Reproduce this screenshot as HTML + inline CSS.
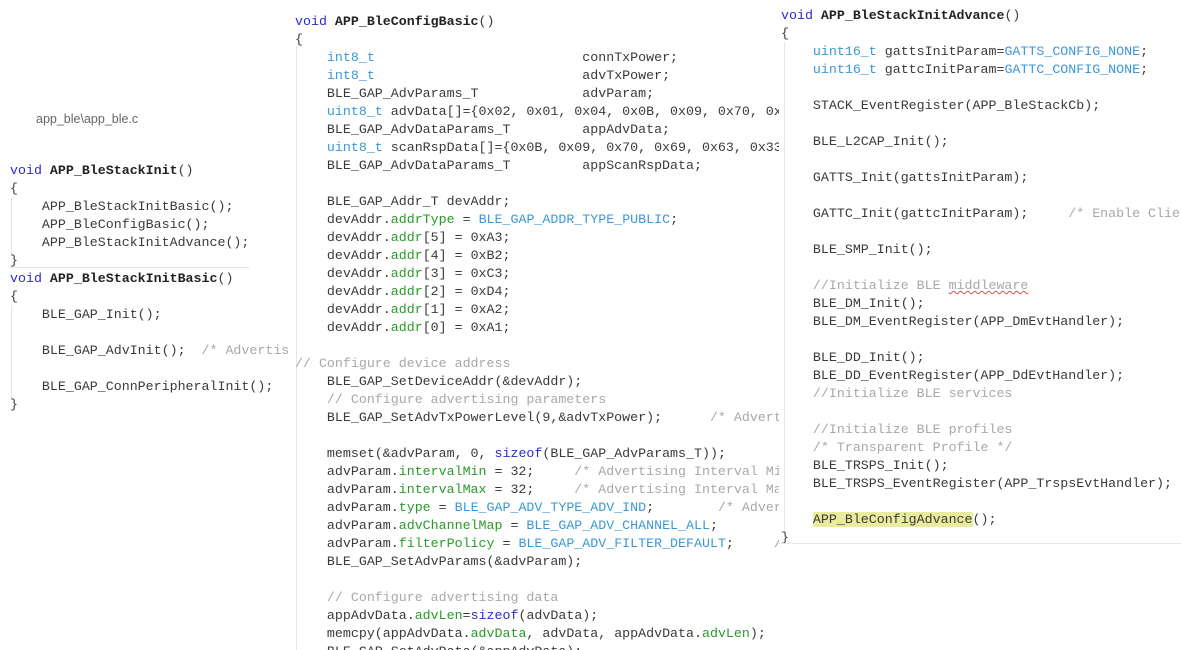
<!DOCTYPE html>
<html><head><meta charset="utf-8"><style>
html,body{margin:0;padding:0;background:#fff;width:1181px;height:650px;overflow:hidden;position:relative}
pre{margin:0;font-family:"Liberation Mono",monospace;font-size:13.3px;line-height:18px;color:#3a3a3a;position:absolute;white-space:pre}
.p{position:absolute;overflow:hidden;background:#fff}
.k{color:#2a2ad0}.b{font-weight:bold;color:#222}.t{color:#3a98d8}.m{color:#2a9a2a}.c{color:#a8a8a8}
.g{position:absolute;width:1px;background:#e6e6e6}
.h{background:#e8ec9c}
.sq{text-decoration:underline wavy #e05050;text-decoration-thickness:1px}
</style></head><body>
<div class="p" style="left:0;top:0;width:292px;height:650px">
<div style="position:absolute;left:36px;top:112px;font-family:'Liberation Sans',sans-serif;font-size:12.5px;color:#666">app_ble\app_ble.c</div>
<div class="g" style="left:11px;top:197px;height:58px"></div>
<div class="g" style="left:11px;top:305px;height:94px"></div>
<div style="position:absolute;left:10px;top:267px;width:240px;height:1px;background:#e4e4e4"></div>
<pre style="left:10px;top:162px"><span class="k">void</span> <span class="b">APP_BleStackInit</span>()
{
    APP_BleStackInitBasic();
    APP_BleConfigBasic();
    APP_BleStackInitAdvance();
}
<span class="k">void</span> <span class="b">APP_BleStackInitBasic</span>()
{
    BLE_GAP_Init();

    BLE_GAP_AdvInit();  <span class="c">/* Advertis</span>

    BLE_GAP_ConnPeripheralInit();
}</pre>
</div>
<div class="p" style="left:292px;top:0;width:488px;height:650px">
<div class="g" style="left:4px;top:46px;height:604px"></div>
<pre style="left:3px;top:13px"><span class="k">void</span> <span class="b">APP_BleConfigBasic</span>()
{
    <span class="t">int8_t</span>                          connTxPower;
    <span class="t">int8_t</span>                          advTxPower;
    BLE_GAP_AdvParams_T             advParam;
    <span class="t">uint8_t</span> advData[]={0x02, 0x01, 0x04, 0x0B, 0x09, 0x70, 0x
    BLE_GAP_AdvDataParams_T         appAdvData;
    <span class="t">uint8_t</span> scanRspData[]={0x0B, 0x09, 0x70, 0x69, 0x63, 0x33
    BLE_GAP_AdvDataParams_T         appScanRspData;

    BLE_GAP_Addr_T devAddr;
    devAddr.<span class="m">addrType</span> = <span class="t">BLE_GAP_ADDR_TYPE_PUBLIC</span>;
    devAddr.<span class="m">addr</span>[5] = 0xA3;
    devAddr.<span class="m">addr</span>[4] = 0xB2;
    devAddr.<span class="m">addr</span>[3] = 0xC3;
    devAddr.<span class="m">addr</span>[2] = 0xD4;
    devAddr.<span class="m">addr</span>[1] = 0xA2;
    devAddr.<span class="m">addr</span>[0] = 0xA1;

<span class="c">// Configure device address</span>
    BLE_GAP_SetDeviceAddr(&amp;devAddr);
    <span class="c">// Configure advertising parameters</span>
    BLE_GAP_SetAdvTxPowerLevel(9,&amp;advTxPower);      <span class="c">/* Advert</span>

    memset(&amp;advParam, 0, <span class="k">sizeof</span>(BLE_GAP_AdvParams_T));
    advParam.<span class="m">intervalMin</span> = 32;     <span class="c">/* Advertising Interval Mi</span>
    advParam.<span class="m">intervalMax</span> = 32;     <span class="c">/* Advertising Interval Ma</span>
    advParam.<span class="m">type</span> = <span class="t">BLE_GAP_ADV_TYPE_ADV_IND</span>;        <span class="c">/* Adver</span>
    advParam.<span class="m">advChannelMap</span> = <span class="t">BLE_GAP_ADV_CHANNEL_ALL</span>;
    advParam.<span class="m">filterPolicy</span> = <span class="t">BLE_GAP_ADV_FILTER_DEFAULT</span>;     <span class="c">/</span>
    BLE_GAP_SetAdvParams(&amp;advParam);

    <span class="c">// Configure advertising data</span>
    appAdvData.<span class="m">advLen</span>=<span class="k">sizeof</span>(advData);
    memcpy(appAdvData.<span class="m">advData</span>, advData, appAdvData.<span class="m">advLen</span>);
    BLE_GAP_SetAdvData(&amp;appAdvData);</pre>
</div>
<div class="p" style="left:779px;top:0;width:402px;height:543px;border-bottom:1px solid #e8e8e8">
<div class="g" style="left:5px;top:42px;height:490px"></div>
<pre style="left:2px;top:7px"><span class="k">void</span> <span class="b">APP_BleStackInitAdvance</span>()
{
    <span class="t">uint16_t</span> gattsInitParam=<span class="t">GATTS_CONFIG_NONE</span>;
    <span class="t">uint16_t</span> gattcInitParam=<span class="t">GATTC_CONFIG_NONE</span>;

    STACK_EventRegister(APP_BleStackCb);

    BLE_L2CAP_Init();

    GATTS_Init(gattsInitParam);

    GATTC_Init(gattcInitParam);     <span class="c">/* Enable Clie</span>

    BLE_SMP_Init();

    <span class="c">//Initialize BLE <span class="sq">middleware</span></span>
    BLE_DM_Init();
    BLE_DM_EventRegister(APP_DmEvtHandler);

    BLE_DD_Init();
    BLE_DD_EventRegister(APP_DdEvtHandler);
    <span class="c">//Initialize BLE services</span>

    <span class="c">//Initialize BLE profiles</span>
    <span class="c">/* Transparent Profile */</span>
    BLE_TRSPS_Init();
    BLE_TRSPS_EventRegister(APP_TrspsEvtHandler);

    <span class="h">APP_BleConfigAdvance</span>();
}</pre>
</div>
</body></html>
